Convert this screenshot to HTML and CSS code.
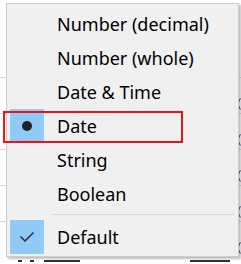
FILE: index.html
```html
<!DOCTYPE html>
<html lang="en">
<head>
  <meta charset="UTF-8">
  <title>Change type menu</title>
  <link rel="stylesheet" href="styles.css">
</head>
<body>
  <div class="sheet">
    <div class="sheet-row"><span class="paren"></span></div>
    <div class="sheet-row"><span class="paren"></span></div>
    <div class="sheet-row"><span class="paren"></span></div>
    <div class="sheet-row"><span class="paren"></span></div>
    <div class="sheet-row"><span class="paren"></span></div>
    <div class="sheet-row foot">
      <span class="stub" style="width: 4px; margin-left: 18px;"></span>
      <span class="stub" style="width: 4px; margin-left: 8px;"></span>
      <span class="stub" style="width: 36px; margin-left: 10px;"></span>
      <span class="stub" style="width: 40px; margin-left: 110px;"></span>
    </div>
  </div>

  <div class="menu">
    <div class="item"><span class="mark"></span><span class="label">Number (decimal)</span></div>
    <div class="item"><span class="mark"></span><span class="label">Number (whole)</span></div>
    <div class="item"><span class="mark"></span><span class="label">Date &amp; Time</span></div>
    <div class="item">
      <span class="mark on"><span class="dot"></span></span>
      <span class="label">Date</span>
    </div>
    <div class="item"><span class="mark"></span><span class="label">String</span></div>
    <div class="item"><span class="mark"></span><span class="label">Boolean</span></div>
    <div class="sep"></div>
    <div class="item">
      <span class="mark on">
        <svg width="16" height="12" viewBox="0 0 16 12"><polyline points="1.5,5.5 6,10 14.5,1.5" fill="none" stroke="#2b2b2b" stroke-width="1.5"/></svg>
      </span>
      <span class="label">Default</span>
    </div>
  </div>

  <div class="callout"></div>
</body>
</html>
```

FILE: styles.css
```css
body {
  margin: 0;
  width: 241px;
  height: 264px;
  overflow: hidden;
  background: #fff;
  font-family: "Noto Sans", "Open Sans", sans-serif;
  position: relative;
}
.sheet {
  padding-top: 77px;
}
.sheet-row {
  height: 35px;
  border-top: 1px solid #d9d9d9;
  position: relative;
}
.paren {
  position: absolute;
  right: -4px;
  top: 20px;
  width: 6px;
  height: 12px;
  border-left: 2px solid #2b5797;
  border-radius: 6px 0 0 6px;
}
.sheet-row.foot {
  border-top: none;
  display: flex;
  padding-top: 3px;
  height: auto;
}
.stub {
  height: 4px;
  border-top: 2px solid #333;
}

/* popup menu */
.menu {
  position: absolute;
  left: 6px;
  top: 3px;
  width: 231px;
  padding: 3px 0 2px;
  background: #f0f0f0;
  border: 1px solid #cccccc;
  box-shadow: 2px 2px 2px rgba(0, 0, 0, 0.25);
  color: #000;
}
.item {
  display: flex;
  align-items: center;
  height: 34px;
  padding-left: 3px;
}
.mark {
  width: 34px;
  height: 34px;
  display: flex;
  align-items: center;
  justify-content: center;
  margin-right: 13px;
}
.mark.on {
  background: #91c9f7;
}
.dot {
  width: 10px;
  height: 10px;
  border-radius: 50%;
  background: #222;
}
.label {
  font-size: 18px;
  white-space: nowrap;
}
.sep {
  height: 1px;
  background: #d7d7d7;
  margin: 3px 4px 5px 44px;
}

.callout {
  position: absolute;
  left: 3px;
  top: 111px;
  width: 176px;
  height: 28px;
  border: 2px solid #e8141c;
}
```
